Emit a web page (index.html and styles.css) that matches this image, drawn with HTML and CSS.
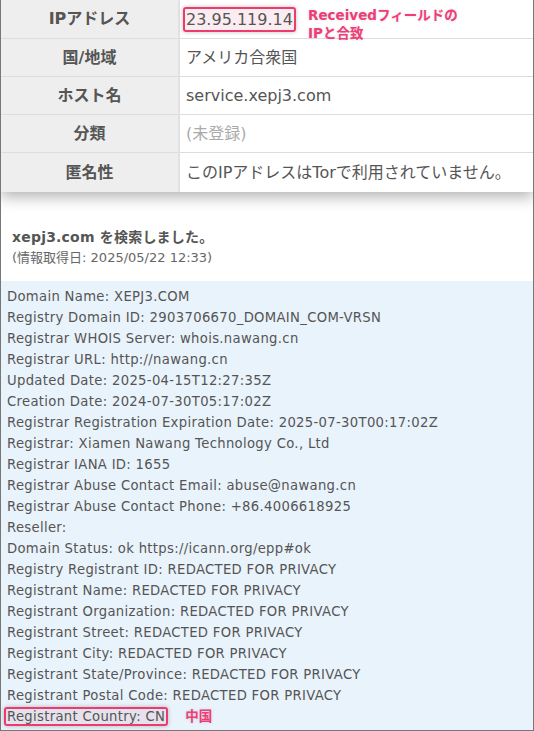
FILE: index.html
```html
<!DOCTYPE html>
<html lang="ja">
<head>
  <meta charset="UTF-8" />
  <title>IPアドレス / WHOIS</title>
  <link rel="stylesheet" href="styles.css">
</head>
<body>
  <div class="frame">
    <table class="ipinfo">
      <tr>
        <th>IPアドレス</th>
        <td class="ip-cell">
          <span class="mark">23.95.119.14</span>
          <span class="note note-ip">Receivedフィールドの<br>IPと合致</span>
        </td>
      </tr>
      <tr>
        <th>国/地域</th>
        <td>アメリカ合衆国</td>
      </tr>
      <tr>
        <th>ホスト名</th>
        <td>service.xepj3.com</td>
      </tr>
      <tr>
        <th>分類</th>
        <td class="muted">(未登録)</td>
      </tr>
      <tr>
        <th>匿名性</th>
        <td>このIPアドレスはTorで利用されていません。</td>
      </tr>
    </table>

    <div class="search-head">
      <h2>xepj3.com を検索しました。</h2>
      <p>(情報取得日: 2025/05/22 12:33)</p>
    </div>

    <div class="whois">
      <div>Domain Name: XEPJ3.COM</div>
      <div>Registry Domain ID: 2903706670_DOMAIN_COM-VRSN</div>
      <div>Registrar WHOIS Server: whois.nawang.cn</div>
      <div>Registrar URL: http://nawang.cn</div>
      <div>Updated Date: 2025-04-15T12:27:35Z</div>
      <div>Creation Date: 2024-07-30T05:17:02Z</div>
      <div>Registrar Registration Expiration Date: 2025-07-30T00:17:02Z</div>
      <div>Registrar: Xiamen Nawang Technology Co., Ltd</div>
      <div>Registrar IANA ID: 1655</div>
      <div>Registrar Abuse Contact Email: abuse@nawang.cn</div>
      <div>Registrar Abuse Contact Phone: +86.4006618925</div>
      <div>Reseller:</div>
      <div>Domain Status: ok https://icann.org/epp#ok</div>
      <div>Registry Registrant ID: REDACTED FOR PRIVACY</div>
      <div>Registrant Name: REDACTED FOR PRIVACY</div>
      <div>Registrant Organization: REDACTED FOR PRIVACY</div>
      <div>Registrant Street: REDACTED FOR PRIVACY</div>
      <div>Registrant City: REDACTED FOR PRIVACY</div>
      <div>Registrant State/Province: REDACTED FOR PRIVACY</div>
      <div>Registrant Postal Code: REDACTED FOR PRIVACY</div>
      <div><span class="mark mark-small">Registrant Country: CN</span><span class="note note-cn">中国</span></div>
    </div>
  </div>
</body>
</html>
```

FILE: styles.css
```css
html, body {
  margin: 0;
  padding: 0;
  background: #fff;
}
body {
  font-family: "DejaVu Sans", "Noto Sans CJK JP", sans-serif;
  color: #555;
}
.frame {
  width: 532px;
  height: 730px;
  border: 1px solid #777;
  border-top: none;
  overflow: hidden;
}
.ipinfo {
  width: 100%;
  border-collapse: collapse;
  font-size: 16px;
  box-shadow: 0 5px 14px rgba(0,0,0,0.3);
  position: relative;
}
.ipinfo th,
.ipinfo td {
  height: 37px;
  padding: 0;
  border-bottom: 1px solid #ddd;
  line-height: 20px;
}
.ipinfo tr:first-child th,
.ipinfo tr:first-child td {
  height: 38px;
}
.ipinfo tr:last-child th,
.ipinfo tr:last-child td {
  border-bottom: none;
  height: 39px;
}
.ipinfo th {
  width: 177px;
  background: #eeeeee;
  border-right: 2px solid #e2e2e2;
  font-weight: bold;
  color: #555;
  text-align: center;
}
.ipinfo td {
  padding-left: 6px;
  background: #fff;
}
.ipinfo td.muted {
  color: #aaa;
}
.ip-cell {
  position: relative;
}
.mark {
  display: inline-block;
  margin-left: -3px;
  padding: 0 1px;
  border: 2px solid #ec3c6e;
  border-radius: 3px;
  background: rgba(200, 40, 90, 0.09);
  box-shadow: 0 0 4px rgba(0,0,0,0.25);
  line-height: 21px;
}
.mark-small {
  line-height: 15px;
}
.note {
  color: #f03c78;
  font-weight: bold;
  font-size: 13.5px;
  letter-spacing: 0;
  text-shadow: 0 0 3px rgba(0,0,0,0.15);
}
.note-ip {
  position: absolute;
  left: 128px;
  top: 6px;
  line-height: 18px;
}
.note-cn {
  margin-left: 17px;
}
.search-head {
  padding: 35px 11px 13px;
}
.search-head h2 {
  margin: 0;
  font-size: 14px;
  line-height: 20px;
  letter-spacing: 0.2px;
  color: #555;
}
.search-head p {
  margin: 1px 0 0;
  font-size: 13px;
  line-height: 20px;
  color: #666;
}
.whois {
  background: #e9f3fb;
  padding: 5px 6px 3px;
  font-size: 13.2px;
  letter-spacing: 0.32px;
  line-height: 21px;
  height: 442px;
}
```
